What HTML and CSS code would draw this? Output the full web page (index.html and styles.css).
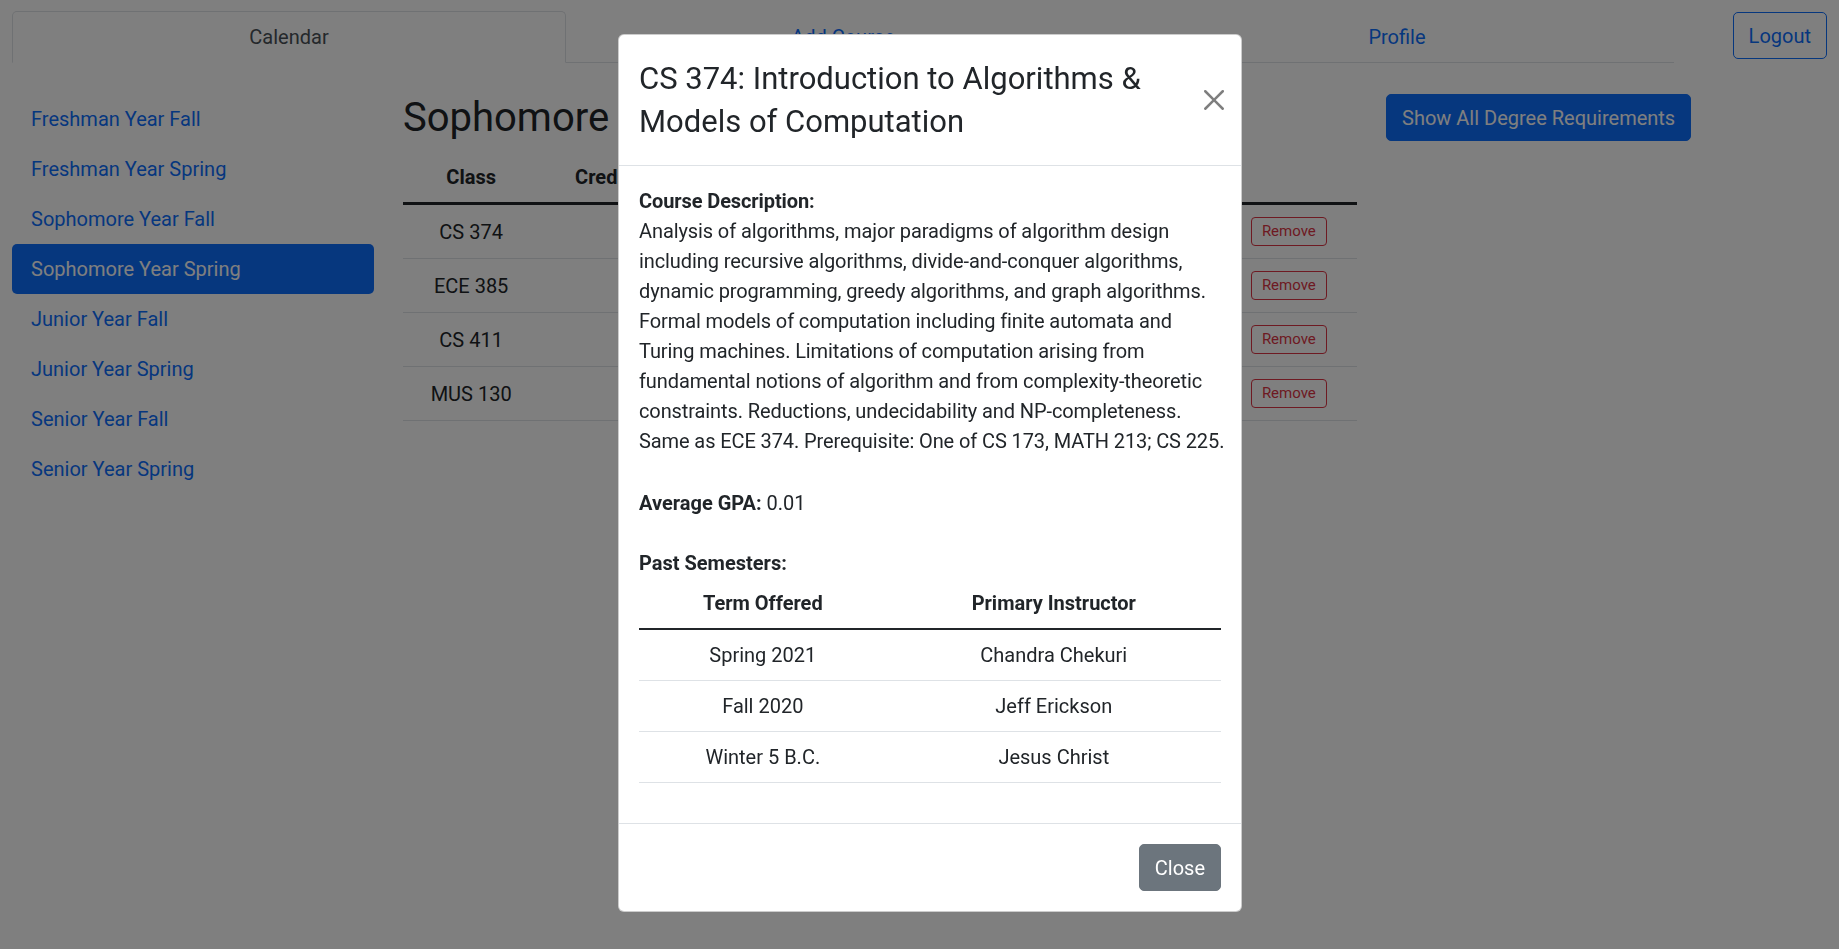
FILE: index.html
```html
<!DOCTYPE html>
<html lang="en">
<head>
<meta charset="utf-8">
<title>Course Planner</title>
<link rel="stylesheet" href="styles.css">
</head>
<body>
<div class="page">
  <header class="topbar">
    <nav class="tabs">
      <a class="tab active">Calendar</a>
      <a class="tab">Add Course</a>
      <a class="tab">Profile</a>
    </nav>
    <button class="btn btn-outline-primary logout">Logout</button>
  </header>

  <div class="layout">
    <aside class="sidebar">
      <a class="pill">Freshman Year Fall</a>
      <a class="pill">Freshman Year Spring</a>
      <a class="pill">Sophomore Year Fall</a>
      <a class="pill active">Sophomore Year Spring</a>
      <a class="pill">Junior Year Fall</a>
      <a class="pill">Junior Year Spring</a>
      <a class="pill">Senior Year Fall</a>
      <a class="pill">Senior Year Spring</a>
    </aside>

    <main class="main">
      <h2 class="sem-title">Sophomore Year Spring</h2>
      <table class="table plan">
        <thead>
          <tr><th>Class</th><th>Credits</th><th></th><th></th><th></th><th></th><th></th></tr>
        </thead>
        <tbody>
          <tr><td>CS 374</td><td></td><td></td><td></td><td></td><td></td><td><button class="btn-remove">Remove</button></td></tr>
          <tr><td>ECE 385</td><td></td><td></td><td></td><td></td><td></td><td><button class="btn-remove">Remove</button></td></tr>
          <tr><td>CS 411</td><td></td><td></td><td></td><td></td><td></td><td><button class="btn-remove">Remove</button></td></tr>
          <tr><td>MUS 130</td><td></td><td></td><td></td><td></td><td></td><td><button class="btn-remove">Remove</button></td></tr>
        </tbody>
      </table>
    </main>

    <div class="actions">
      <button class="btn btn-primary">Show All Degree Requirements</button>
    </div>
  </div>
</div>

<div class="backdrop"></div>

<div class="modal">
  <div class="modal-header">
    <h3 class="modal-title">CS 374: Introduction to Algorithms &amp; Models of Computation</h3>
    <button class="btn-close" aria-label="Close">
      <svg viewBox="0 0 16 16" width="20" height="20"><path d="M.293.293a1 1 0 011.414 0L8 6.586 14.293.293a1 1 0 111.414 1.414L9.414 8l6.293 6.293a1 1 0 01-1.414 1.414L8 9.414l-6.293 6.293a1 1 0 01-1.414-1.414L6.586 8 .293 1.707a1 1 0 010-1.414z"/></svg>
    </button>
  </div>
  <div class="modal-body">
    <p class="desc"><b>Course Description:</b><br>Analysis of algorithms, major paradigms of algorithm design<br>including recursive algorithms, divide-and-conquer algorithms,<br>dynamic programming, greedy algorithms, and graph algorithms.<br>Formal models of computation including finite automata and<br>Turing machines. Limitations of computation arising from<br>fundamental notions of algorithm and from complexity-theoretic<br>constraints. Reductions, undecidability and NP-completeness.<br>Same as ECE 374. Prerequisite: One of CS 173, MATH 213; CS 225.</p>
    <p class="gpa"><b>Average GPA:</b> 0.01</p>
    <p class="past-label"><b>Past Semesters:</b></p>
    <table class="table terms">
      <thead>
        <tr><th class="c-term">Term Offered</th><th class="c-inst">Primary Instructor</th></tr>
      </thead>
      <tbody>
        <tr><td>Spring 2021</td><td>Chandra Chekuri</td></tr>
        <tr><td>Fall 2020</td><td>Jeff Erickson</td></tr>
        <tr><td>Winter 5 B.C.</td><td>Jesus Christ</td></tr>
      </tbody>
    </table>
  </div>
  <div class="modal-footer">
    <button class="btn btn-secondary">Close</button>
  </div>
</div>
</body>
</html>
```
FILE: styles.css
```css
* { box-sizing: border-box; }

html, body {
  margin: 0;
  padding: 0;
}

body {
  font-family: Roboto, "Liberation Sans", sans-serif;
  font-size: 20px;
  line-height: 30px;
  color: #212529;
  background: #fff;
  overflow: hidden;
}

button {
  font-family: inherit;
}

/* ---------- top bar ---------- */
.topbar {
  display: flex;
  align-items: flex-start;
  padding: 11px 12px 0 12px;
}

.tabs {
  display: flex;
  width: 1662px;
  border-bottom: 1px solid #dee2e6;
}

.tab {
  flex: 1 1 0;
  text-align: center;
  padding: 10px 20px;
  line-height: 30px;
  border: 1px solid transparent;
  border-top-left-radius: 5px;
  border-top-right-radius: 5px;
  margin-bottom: -1px;
  color: #0d6efd;
  text-decoration: none;
}

.tab.active {
  color: #495057;
  background: #fff;
  border-color: #dee2e6 #dee2e6 #fff;
}

.btn {
  display: inline-block;
  font-size: 20px;
  line-height: 30px;
  padding: 7.5px 15px;
  border: 1px solid transparent;
  border-radius: 5px;
  background: transparent;
  cursor: pointer;
}

.btn-outline-primary {
  color: #0d6efd;
  border-color: #0d6efd;
}

.logout {
  margin-left: auto;
  margin-top: 1px;
}

.btn-primary {
  color: #fff;
  background: #0d6efd;
  border-color: #0d6efd;
}

.btn-secondary {
  color: #fff;
  background: #6c757d;
  border-color: #6c757d;
}

/* ---------- layout ---------- */
.layout {
  display: flex;
  align-items: flex-start;
  padding: 31px 12px 0 12px;
}

.sidebar {
  width: 362px;
  display: flex;
  flex-direction: column;
}

.pill {
  display: block;
  padding: 10px 19px;
  line-height: 30px;
  border-radius: 5px;
  color: #0d6efd;
  text-decoration: none;
}

.pill.active {
  color: #fff;
  background: #0d6efd;
}

.main {
  width: 954px;
  margin-left: 29px;
}

.sem-title {
  margin: 0 0 10px 0;
  font-size: 40px;
  font-weight: 400;
  line-height: 48px;
}

.actions {
  margin-left: 29px;
}

/* ---------- tables ---------- */
.table {
  width: 100%;
  border-collapse: collapse;
  color: #212529;
}

.table th,
.table td {
  text-align: center;
  vertical-align: middle;
  padding: 10px;
  line-height: 30px;
}

.table th {
  font-weight: 700;
  border-bottom: 2px solid #212529;
}

.table td {
  border-bottom: 1px solid #dee2e6;
}

.plan {
  table-layout: fixed;
}

.plan th {
  border-bottom-width: 3px;
}

.plan td {
  padding: 11.5px 10px;
  height: 54px;
}

.btn-remove {
  display: block;
  margin: 0 auto;
  font-size: 15px;
  line-height: 21px;
  padding: 3px 10px;
  color: #dc3545;
  background: transparent;
  border: 1px solid #dc3545;
  border-radius: 4px;
}

/* ---------- modal ---------- */
.backdrop {
  position: fixed;
  inset: 0;
  background: rgba(0, 0, 0, 0.5);
  z-index: 10;
}

.modal {
  position: fixed;
  top: 34px;
  left: 618px;
  width: 624px;
  z-index: 20;
  background: #fff;
  border: 1px solid rgba(0, 0, 0, 0.2);
  border-radius: 6px;
}

.modal-header {
  display: flex;
  align-items: center;
  padding: 22px 20px 22px 20px;
  border-bottom: 1px solid #dee2e6;
}

.modal-title {
  flex: 1 1 auto;
  margin: 0;
  font-size: 31px;
  font-weight: 400;
  line-height: 43px;
}

.btn-close {
  flex: none;
  width: 20px;
  height: 20px;
  padding: 0;
  margin: 0 -3px 0 20px;
  border: 0;
  background: transparent;
  opacity: 0.5;
  display: flex;
}

.btn-close svg {
  display: block;
  fill: #000;
}

.modal-body {
  padding: 20px;
}

.modal-body p {
  margin: 0;
}

.desc {
  white-space: nowrap;
  letter-spacing: -0.1px;
  margin-bottom: 32px !important;
}

.gpa {
  margin-bottom: 30px !important;
}

.terms {
  margin-bottom: 20px;
}

.terms .c-term { width: 248px; }
.terms .c-inst { width: 335px; }

.modal-footer {
  display: flex;
  justify-content: flex-end;
  padding: 15px;
  border-top: 1px solid #dee2e6;
}

.modal-footer .btn {
  margin: 5px;
}
```
